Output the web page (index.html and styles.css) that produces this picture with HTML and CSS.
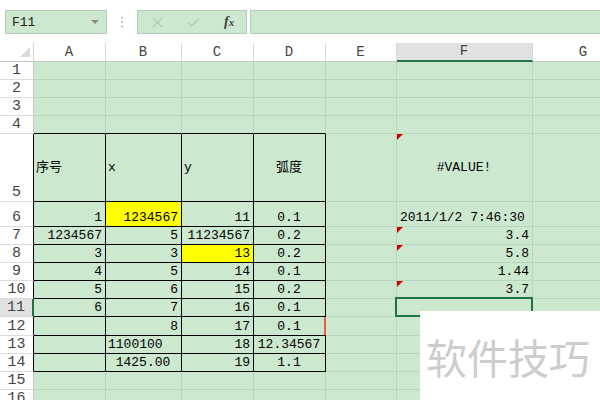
FILE: index.html
```html
<!DOCTYPE html>
<html lang="zh-CN">
<head>
  <meta charset="UTF-8">
  <title>Sheet1</title>
  <link rel="stylesheet" href="styles.css">
</head>
<body>
  <!-- formula bar -->
  <div class="topbar">
    <div class="namebox">F11<span class="caret"></span></div>
    <div class="grip">
      <svg width="4" height="12" viewBox="0 0 4 12"><circle cx="2" cy="1.5" r="1" /><circle cx="2" cy="6" r="1" /><circle cx="2" cy="10.5" r="1" /></svg>
    </div>
    <div class="fxbox">
      <svg class="ic-x" width="11" height="11" viewBox="0 0 11 11"><path d="M1 1L10 10M10 1L1 10" /></svg>
      <svg class="ic-ok" width="13" height="9" viewBox="0 0 13 9"><path d="M1 4.5L4.5 8L12 1" /></svg>
      <span class="fx">f<i>x</i></span>
    </div>
    <div class="formula"></div>
  </div>

  <!-- grid -->
  <div class="sheet">
    <div class="corner"><i></i></div><div class="hd">A</div><div class="hd">B</div><div class="hd">C</div><div class="hd">D</div><div class="hd">E</div><div class="hd on">F</div><div class="hd">G</div>

    <div class="rh">1</div><div></div><div></div><div></div><div></div><div></div><div></div><div></div>
    <div class="rh">2</div><div></div><div></div><div></div><div></div><div></div><div></div><div></div>
    <div class="rh">3</div><div></div><div></div><div></div><div></div><div></div><div></div><div></div>
    <div class="rh">4</div><div class="top"></div><div class="top"></div><div class="top"></div><div class="top"></div><div></div><div></div><div></div>

    <div class="rh tb">5</div><div class="t mid">序号</div><div class="t mid">x</div><div class="t mid">y</div><div class="t mid ctr">弧度</div><div></div><div class="mid ctr note">#VALUE!</div><div></div>
    <div class="rh tb">6</div><div class="t r">1</div><div class="t r y">1234567</div><div class="t r">11</div><div class="t ctr">0.1</div><div></div><div class="date">2011/1/2 7:46:30</div><div></div>
    <div class="rh tb">7</div><div class="t r">1234567</div><div class="t r">5</div><div class="t r">11234567</div><div class="t ctr">0.2</div><div></div><div class="r note">3.4</div><div></div>
    <div class="rh tb">8</div><div class="t r">3</div><div class="t r">3</div><div class="t r y">13</div><div class="t ctr">0.2</div><div></div><div class="r note">5.8</div><div></div>
    <div class="rh tb">9</div><div class="t r">4</div><div class="t r">5</div><div class="t r">14</div><div class="t ctr">0.1</div><div></div><div class="r">1.44</div><div></div>
    <div class="rh tb">10</div><div class="t r">5</div><div class="t r">6</div><div class="t r">15</div><div class="t ctr">0.2</div><div></div><div class="r note">3.7</div><div></div>
    <div class="rh tb on">11</div><div class="t r">6</div><div class="t r">7</div><div class="t r">16</div><div class="t ctr">0.1</div><div></div><div class="sel"></div><div></div>
    <div class="rh tb">12</div><div class="t"></div><div class="t r">8</div><div class="t r">17</div><div class="t ctr flag">0.1</div><div></div><div></div><div></div>
    <div class="rh tb">13</div><div class="t"></div><div class="t">1100100</div><div class="t r">18</div><div class="t ctr">12.34567</div><div></div><div></div><div></div>
    <div class="rh tb">14</div><div class="t"></div><div class="t ctr">1425.00</div><div class="t r">19</div><div class="t ctr">1.1</div><div></div><div></div><div></div>

    <div class="rh">15</div><div></div><div></div><div></div><div></div><div></div><div></div><div></div>
    <div class="rh">16</div><div></div><div></div><div></div><div></div><div></div><div></div><div></div>
  </div>

  <div class="watermark">软件技巧</div>
</body>
</html>
```

FILE: styles.css
```css
* {
  margin: 0;
  padding: 0;
  box-sizing: border-box;
}

body {
  font-family: "Liberation Mono", "Noto Sans CJK SC", monospace;
  font-size: 13px;
  color: #000;
  background: #fff;
  width: 600px;
  height: 400px;
  overflow: hidden;
  position: relative;
}

/* Formula bar */
.topbar {
  display: flex;
  height: 43px;
  padding: 10px 0 9px 5px;
}

.namebox {
  width: 102px;
  display: flex;
  align-items: center;
  padding-left: 6px;
  background: #cce8cf;
  border: 1px solid #b6cbb9;
  color: #222;
  position: relative;
}

.caret {
  position: absolute;
  right: 7px;
  top: 9px;
  border-top: 4px solid #8a8a8a;
  border-left: 4px solid transparent;
  border-right: 4px solid transparent;
}

.grip {
  width: 30px;
  display: flex;
  align-items: center;
  justify-content: center;
  fill: #b0b0b0;
}

.fxbox {
  width: 110px;
  margin-right: 3px;
  display: flex;
  align-items: center;
  padding-left: 14px;
  background: #cce8cf;
  border: 1px solid #b6cbb9;
}

.ic-x,
.ic-ok {
  fill: none;
  stroke: #b3c6b6;
  stroke-width: 1.4;
}

.ic-ok {
  margin-left: 24px;
}

.fx {
  margin-left: 24px;
  font-family: "Liberation Serif", serif;
  font-style: italic;
  font-weight: bold;
  font-size: 14px;
  color: #444;
}

.fx i {
  font-size: 11px;
}

.formula {
  flex: 1;
  background: #cce8cf;
  border: 1px solid #b6cbb9;
  border-right: none;
}

/* Sheet grid */
.sheet {
  display: grid;
  grid-template-columns: 34px 72px 76px 72px 72px 71px 136px 102px;
  grid-template-rows: 19px 18px 18px 18px 18px 68px 25px 18px 18px 18px 18px 18px 19px 18px 18px 18px 18px;
}

.sheet > div {
  position: relative;
  display: flex;
  align-items: flex-end;
  padding: 0 3px 0 2px;
  line-height: 17px;
  white-space: nowrap;
  background: #cce8cf;
  border-right: 1px solid #b9d5bc;
  border-bottom: 1px solid #b9d5bc;
}

.sheet .corner {
  background: #fff;
  justify-content: flex-end;
  padding: 0 3px 4px 0;
  border-right-color: #d4d4d4;
  border-bottom-color: #c6c6c6;
}

.corner i {
  border-left: 10px solid transparent;
  border-bottom: 10px solid #dadada;
}

.sheet .hd {
  background: #fff;
  justify-content: center;
  align-items: center;
  font-size: 14px;
  color: #444;
  border-right-color: #d8d8d8;
  border-bottom-color: #c6c6c6;
}

.sheet .hd.on {
  background: #e1e1e1;
  border-bottom: 2px solid #217346;
}

.sheet .rh {
  background: #fff;
  justify-content: center;
  padding: 0;
  font-size: 15px;
  color: #444;
  border-right-color: #c6c6c6;
  border-bottom-color: #dcdcdc;
}

.sheet .tb {
  border-right-color: #000;
}

.sheet .rh.on {
  background: #e1e1e1;
  border-right: 2px solid #217346;
}

/* bordered table A5:D14 */
.sheet .top {
  border-bottom-color: #000;
}

.sheet .t {
  border-right-color: #000;
  border-bottom-color: #000;
}

.sheet .r {
  justify-content: flex-end;
}

.sheet .ctr {
  justify-content: center;
}

.sheet .mid {
  align-items: center;
}

.sheet .y {
  background: #ffff00;
}

.sheet .date {
  padding-left: 3px;
}

/* comment marker */
.sheet .note::before {
  content: "";
  position: absolute;
  left: 0;
  top: 0;
  border-top: 6px solid #d40000;
  border-right: 6px solid transparent;
}

.sheet .flag::after {
  content: "";
  position: absolute;
  right: -1px;
  top: 0;
  bottom: 0;
  width: 2px;
  background: #e6604e;
}

/* active cell */
.sheet .sel::after {
  content: "";
  position: absolute;
  left: -2px;
  top: -2px;
  right: -1px;
  bottom: -1px;
  border: 2px solid #217346;
  z-index: 1;
}

.watermark {
  position: absolute;
  left: 420px;
  top: 311px;
  width: 180px;
  height: 89px;
  display: flex;
  align-items: center;
  padding-left: 6px;
  background: #fff;
  font-family: "Noto Sans CJK SC", sans-serif;
  font-size: 41px;
  color: #cdcdcd;
  z-index: 2;
}
```
